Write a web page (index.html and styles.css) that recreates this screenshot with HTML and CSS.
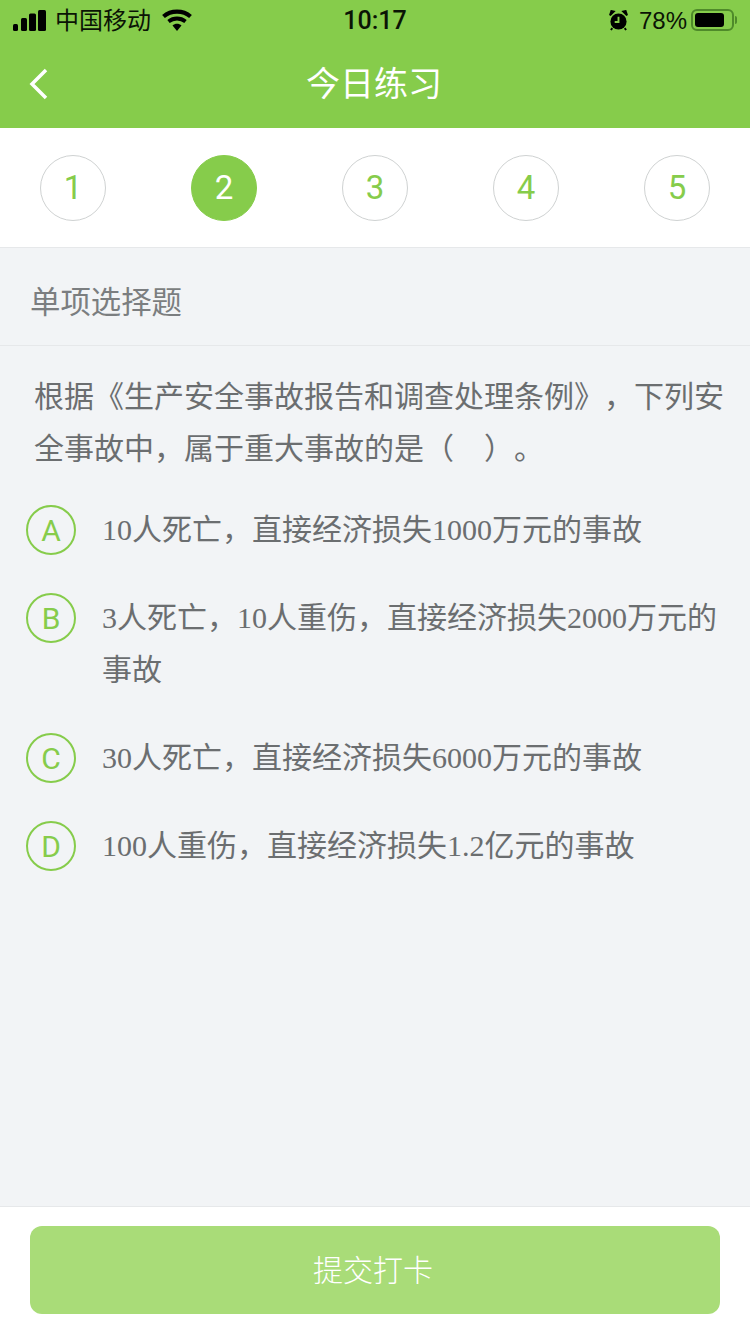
FILE: index.html
```html
<!DOCTYPE html>
<html lang="zh-CN">
<head>
<meta charset="utf-8">
<title>今日练习</title>
<link rel="stylesheet" href="styles.css">
</head>
<body>
<div class="page">
  <header class="header">
    <div class="status">
      <div class="status-left">
        <svg class="signal" width="33" height="21" viewBox="0 0 33 21"><rect x="0" y="14" width="5" height="7" rx="1.500"/><rect x="8" y="8" width="6" height="13" rx="1.500"/><rect x="16" y="3.500" width="7" height="17.500" rx="1.500"/><rect x="25" y="0" width="8" height="21" rx="1.500"/></svg>
        <span class="carrier">中国移动</span>
        <svg class="wifi" width="30" height="22" viewBox="0 0 30 22"><path d="M1.500 7.500C9 1 21 1 28.500 7.500" fill="none" stroke="#000" stroke-width="4.200"/><path d="M6.500 12.500C11.500 8.500 18.500 8.500 23.500 12.500" fill="none" stroke="#000" stroke-width="3.800"/><path d="M10.500 16.500C13 14.300 17 14.300 19.500 16.500L15 22Z"/></svg>
      </div>
      <div class="time">10:17</div>
      <div class="status-right">
        <svg class="alarm" width="19" height="21" viewBox="0 0 20 22"><circle cx="10" cy="12" r="8.500"/><path d="M1 5.500 5 1.500 2.500 1ZM19 5.500 15 1.500 17.500 1Z" stroke="#000" stroke-width="2"/><path d="M3.500 19 2 21M16.500 19 18 21" stroke="#000" stroke-width="2"/><path d="M10 7v5.500H6" fill="none" stroke="#86cc4b" stroke-width="2"/></svg>
        <span class="percent">78%</span>
        <div class="battery"><div class="battery-shell"><div class="battery-fill"></div></div><div class="battery-cap"></div></div>
      </div>
    </div>
    <div class="nav">
      <svg class="back" width="20" height="32" viewBox="0 0 20 32"><path d="M17 2 3 16l14 14" fill="none" stroke="#fff" stroke-width="3.500"/></svg>
      <h1 class="title">今日练习</h1>
    </div>
  </header>

  <div class="steps">
    <div class="step">1</div>
    <div class="step active">2</div>
    <div class="step">3</div>
    <div class="step">4</div>
    <div class="step">5</div>
  </div>

  <main class="main">
    <div class="type">单项选择题</div>
    <p class="question">根据《生产安全事故报告和调查处理条例》，下列安全事故中，属于重大事故的是（　）。</p>
    <ul class="options">
      <li class="option"><span class="letter">A</span><span class="text">10人死亡，直接经济损失1000万元的事故</span></li>
      <li class="option"><span class="letter">B</span><span class="text">3人死亡，10人重伤，直接经济损失2000万元的事故</span></li>
      <li class="option"><span class="letter">C</span><span class="text">30人死亡，直接经济损失6000万元的事故</span></li>
      <li class="option"><span class="letter">D</span><span class="text">100人重伤，直接经济损失1.2亿元的事故</span></li>
    </ul>
  </main>

  <footer class="footer">
    <button class="submit" type="button">提交打卡</button>
  </footer>
</div>
</body>
</html>
```

FILE: styles.css
```css
* { box-sizing: border-box; }
html, body { margin: 0; padding: 0; }
body {
  width: 750px;
  height: 1334px;
  overflow: hidden;
  font-family: "Liberation Sans", "Noto Sans CJK SC", sans-serif;
  background: #f2f4f6;
  text-spacing-trim: space-all;
}
.page { display: flex; flex-direction: column; height: 1334px; }

.header { background: #86cc4b; height: 128px; flex: none; }
.status {
  height: 40px;
  padding: 0 13px 0 13px;
  display: grid;
  grid-template-columns: 1fr auto 1fr;
  align-items: center;
  color: #0b1405;
}
.status-left { display: flex; align-items: center; }
.signal { margin-right: 9px; }
.carrier { font-size: 24px; line-height: 40px; position: relative; top: 1px; }
.wifi { margin-left: 11px; }
.time { font-family: Roboto, "Liberation Sans", sans-serif; font-size: 25px; font-weight: 500; }
.status-right { display: flex; align-items: center; justify-content: flex-end; }
.alarm { margin-right: 11px; }
.percent { font-size: 24px; margin-right: 4px; position: relative; top: 1px; }
.battery { display: flex; align-items: center; }
.battery-shell {
  width: 43px;
  height: 22px;
  border: 2px solid #4f8a2a;
  border-radius: 6px;
  padding: 2px;
}
.battery-fill { width: 29px; height: 14px; background: #000; border-radius: 3px; }
.battery-cap { width: 2px; height: 8px; background: #4f8a2a; margin-left: 1px; border-radius: 0 2px 2px 0; }

.nav {
  position: relative;
  height: 88px;
  display: flex;
  justify-content: center;
  padding-right: 2px;
}
.back { position: absolute; left: 29px; top: 28px; }
.title { margin: 0; font-size: 34px; font-weight: 400; color: #fff; line-height: 88px; }

.steps {
  flex: none;
  height: 120px;
  background: #fff;
  border-bottom: 1px solid #e6e8ea;
  padding: 0 40px;
  display: flex;
  align-items: center;
  justify-content: space-between;
}
.step {
  width: 66px;
  height: 66px;
  border-radius: 50%;
  border: 1px solid #cfd2d2;
  color: #86cc4b;
  font-family: Roboto, "Liberation Sans", sans-serif;
  font-weight: 400;
  font-size: 33px;
  display: flex;
  align-items: center;
  justify-content: center;
}
.step.active { background: #86cc4b; border-color: #86cc4b; color: #fff; }

.main { flex: 1; }
.type {
  height: 98px;
  padding-left: 30px;
  border-bottom: 1px solid #e6e8ea;
  font-size: 30.400px;
  line-height: 108px;
  color: #7b7e80;
}
.question {
  margin: 0;
  padding: 25px 20px 0 34px;
  font-size: 30px;
  line-height: 52px;
  color: #6b6e70;
}
.options { list-style: none; margin: 29px 0 0; padding: 0 26px; display: flex; flex-direction: column; gap: 36px; }
.option { display: flex; align-items: flex-start; }
.letter {
  flex: none;
  width: 50px;
  height: 50px;
  margin-top: 1px;
  border: 2px solid #86cc4b;
  border-radius: 50%;
  color: #86cc4b;
  font-family: Roboto, "Liberation Sans", sans-serif;
  font-weight: 400;
  font-size: 30px;
  display: flex;
  align-items: center;
  justify-content: center;
}
.text {
  margin-left: 26px;
  font-family: "Liberation Serif", "Noto Sans CJK SC", serif;
  font-size: 30px;
  line-height: 52px;
  color: #6b6e70;
}

.footer {
  flex: none;
  height: 128px;
  background: #fff;
  border-top: 1px solid #e6e8ea;
  padding: 19px 30px 0;
}
.submit {
  display: block;
  width: 690px;
  height: 88px;
  padding: 0 4px 4px 0;
  border: 0;
  border-radius: 12px;
  background: #a9dc78;
  color: #fff;
  font-family: inherit;
  font-size: 30px;
  font-weight: 300;
}
```
